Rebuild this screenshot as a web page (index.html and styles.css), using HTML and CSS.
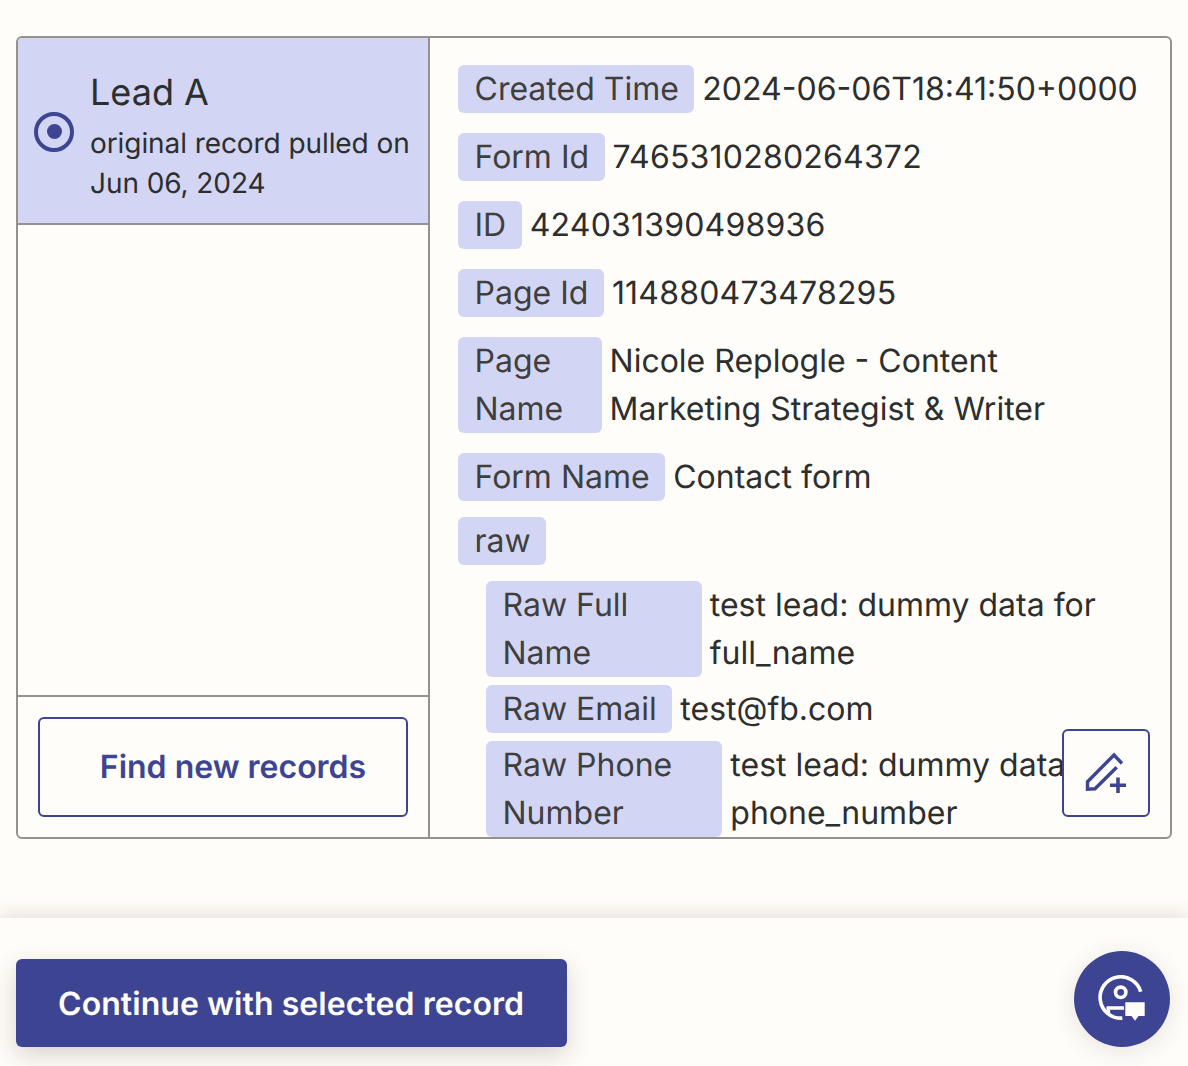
FILE: index.html
```html
<!DOCTYPE html>
<html lang="en">
<head>
  <meta charset="UTF-8">
  <title>Select a record</title>
  <link rel="stylesheet" href="styles.css">
</head>
<body>

<main class="page">
  <section class="panel">
    <div class="records">
      <div class="record">
        <span class="radio"></span>
        <div class="record-text">
          <h2>Lead A</h2>
          <p>original record pulled on Jun 06, 2024</p>
        </div>
      </div>
      <div class="records-space"></div>
      <div class="records-foot">
        <button class="find-btn">Find new records</button>
      </div>
    </div>

    <div class="details">
      <div class="rows">
        <div class="row"><span class="chip">Created Time</span><span class="val">2024-06-06T18:41:50+0000</span></div>
        <div class="row"><span class="chip">Form Id</span><span class="val num">7465310280264372</span></div>
        <div class="row"><span class="chip">ID</span><span class="val num">424031390498936</span></div>
        <div class="row"><span class="chip">Page Id</span><span class="val num">114880473478295</span></div>
        <div class="row"><span class="chip">Page Name</span><span class="val">Nicole Replogle - Content Marketing Strategist &amp; Writer</span></div>
        <div class="row row-tight"><span class="chip">Form Name</span><span class="val">Contact form</span></div>
        <div class="row row-tight"><span class="chip">raw</span></div>
        <div class="nested">
          <div class="row"><span class="chip">Raw Full Name</span><span class="val">test lead: dummy data for full_name</span></div>
          <div class="row"><span class="chip">Raw Email</span><span class="val">test@fb.com</span></div>
          <div class="row"><span class="chip">Raw Phone Number</span><span class="val">test lead: dummy data for phone_number</span></div>
        </div>
      </div>
      <button class="edit-btn" aria-label="Add field">
        <svg width="48" height="48" viewBox="0 0 48 48" fill="none" stroke="#3d4592" stroke-width="3.4">
          <path d="M40 14.5 32 6 5.5 32.7V40.2L13 39.8 34.7 18.3"/>
          <path d="M28 36.3H44M36 28.5V44" stroke-width="3.6"/>
        </svg>
      </button>
    </div>
  </section>
</main>

<footer class="bar">
  <button class="continue-btn">Continue with selected record</button>
  <button class="help-btn" aria-label="Get help">
    <svg width="48" height="48" viewBox="0 0 48 48" fill="none" stroke="#fffdf9" stroke-width="3.6">
      <path d="M42.7 16.7A20.7 20.7 0 1 0 24.3 43.1"/>
      <circle cx="22.7" cy="17.3" r="5.2"/>
      <path d="M10.3 38V33H26"/>
      <path d="M27.3 27.3H46.7V41H40.5L37 45.7 33.5 41H27.3Z" fill="#fffdf9" stroke="none"/>
    </svg>
  </button>
</footer>

</body>
</html>
```

FILE: styles.css
```css
* {
  box-sizing: border-box;
}
html, body {
  height: 100%;
}
body {
  margin: 0;
  background: #fffdf9;
  color: #2d2e2e;
  font-family: Inter, 'Noto Sans', sans-serif;
  text-rendering: geometricPrecision;
  overflow: hidden;
}
button {
  font-family: inherit;
  text-rendering: inherit;
  cursor: pointer;
}
.page {
  padding: 36px 16px 0;
}
.panel {
  display: flex;
  height: 803px;
  border: 2px solid #95928e;
  border-radius: 6px;
  overflow: hidden;
}
.records {
  display: flex;
  flex-direction: column;
  width: 412px;
  flex-shrink: 0;
  border-right: 2px solid #95928e;
}
.record {
  display: flex;
  align-items: center;
  gap: 16px;
  height: 187px;
  padding: 0 16px;
  background: #d2d6f4;
  border-bottom: 2px solid #95928e;
}
.radio {
  display: flex;
  align-items: center;
  justify-content: center;
  width: 40px;
  height: 40px;
  flex-shrink: 0;
  margin-top: 2px;
  border: 4px solid #3d4592;
  border-radius: 50%;
}
.radio::after {
  content: "";
  width: 15px;
  height: 15px;
  background: #3d4592;
  border-radius: 50%;
}
.record-text {
  padding-top: 9px;
}
.record-text h2 {
  margin: 0 0 7px;
  font-size: 36px;
  line-height: 48px;
  font-weight: 400;
}
.record-text p {
  margin: 0;
  font-size: 28px;
  line-height: 40px;
  letter-spacing: -0.08px;
}
.records-space {
  flex: 1;
}
.records-foot {
  padding: 20px;
  border-top: 2px solid #95928e;
}
.find-btn {
  display: block;
  width: 100%;
  height: 100px;
  padding: 0 0 2px 20px;
  background: #fffdf9;
  color: #3d4592;
  border: 2px solid #3d4592;
  border-radius: 6px;
  font-size: 32px;
  font-weight: 600;
}
.details {
  position: relative;
  flex: 1;
  min-width: 0;
}
.rows {
  height: 100%;
  padding: 27px 28px 0;
  overflow: hidden;
  font-size: 32px;
  line-height: 48px;
}
.row {
  display: flex;
  align-items: flex-start;
  gap: 8px;
  margin-bottom: 20px;
}
.row-tight {
  margin-bottom: 16px;
}
.chip {
  padding: 0 15.5px 0 16.5px;
  background: #d2d6f4;
  color: #403f3e;
  border-radius: 6px;
}
.num {
  letter-spacing: 0.2px;
}
.nested {
  margin-right: -12px;
  padding-left: 28px;
}
.nested .row {
  margin-bottom: 8px;
}
.edit-btn {
  position: absolute;
  right: 20px;
  bottom: 20px;
  display: flex;
  align-items: center;
  justify-content: center;
  width: 88px;
  height: 88px;
  padding: 0;
  background: #fffdf9;
  border: 2px solid #3d4592;
  border-radius: 6px;
}
.bar {
  position: relative;
  margin-top: 79px;
  height: 148px;
  padding: 41px 16px 0;
  background: #fffdf9;
  box-shadow: 0 -2px 18px rgba(60, 40, 30, 0.16);
}
.continue-btn {
  height: 88px;
  padding: 0 43px 0 42px;
  background: #3d4592;
  color: #fffdf9;
  border: 0;
  border-radius: 6px;
  font-size: 32px;
  font-weight: 600;
  letter-spacing: 0.07px;
  box-shadow: 0 8px 24px rgba(60, 40, 30, 0.2);
}
.help-btn {
  position: absolute;
  left: 1074px;
  top: 33px;
  display: flex;
  align-items: center;
  justify-content: center;
  width: 96px;
  height: 96px;
  padding: 0;
  background: #3d4592;
  border: 0;
  border-radius: 50%;
  box-shadow: 0 4px 24px rgba(60, 40, 30, 0.12);
}
```
